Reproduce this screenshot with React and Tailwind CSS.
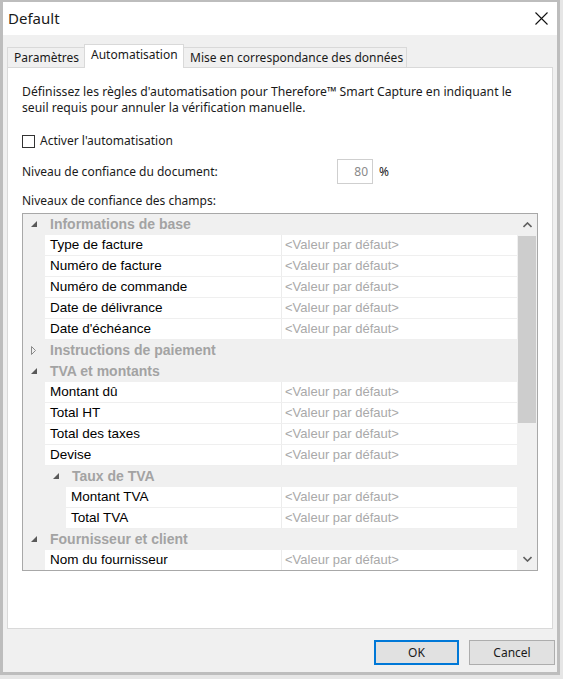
import React from "react";

const ui = { fontFamily: '"Noto Sans", "Open Sans", sans-serif' };
const tree = { fontFamily: '"Liberation Sans", Arial, sans-serif' };

const rows = [
  { type: "group", label: "Informations de base", level: 1, open: true },
  { type: "item", label: "Type de facture", level: 1 },
  { type: "item", label: "Numéro de facture", level: 1 },
  { type: "item", label: "Numéro de commande", level: 1 },
  { type: "item", label: "Date de délivrance", level: 1 },
  { type: "item", label: "Date d'échéance", level: 1 },
  { type: "group", label: "Instructions de paiement", level: 1, open: false },
  { type: "group", label: "TVA et montants", level: 1, open: true },
  { type: "item", label: "Montant dû", level: 1 },
  { type: "item", label: "Total HT", level: 1 },
  { type: "item", label: "Total des taxes", level: 1 },
  { type: "item", label: "Devise", level: 1 },
  { type: "group", label: "Taux de TVA", level: 2, open: true },
  { type: "item", label: "Montant TVA", level: 2 },
  { type: "item", label: "Total TVA", level: 2 },
  { type: "group", label: "Fournisseur et client", level: 1, open: true },
  { type: "item", label: "Nom du fournisseur", level: 1 },
];

function Arrow({ open }) {
  if (open) {
    return (
      <svg width="7" height="7" viewBox="0 0 7 7">
        <polygon points="6,0 6,6 0,6" fill="#595959" />
      </svg>
    );
  }
  return (
    <svg width="6" height="9" viewBox="0 0 6 9">
      <polygon points="0.5,0.5 4.5,4.5 0.5,8.5" fill="none" stroke="#8a8a8a" />
    </svg>
  );
}

function Row({ row }) {
  if (row.type === "group") {
    return (
      <div className="flex h-[21px] shrink-0 items-center">
        <div className={row.level === 2 ? "w-[30px] shrink-0" : "w-[8px] shrink-0"} />
        <div className="flex w-[19px] shrink-0 items-center">
          <Arrow open={row.open} />
        </div>
        <span className="text-[14px] font-bold text-[#a3a3a3]" style={tree}>
          {row.label}
        </span>
      </div>
    );
  }
  return (
    <div className="flex h-[21px] shrink-0">
      <div className={row.level === 2 ? "w-[43px] shrink-0" : "w-[22px] shrink-0"} />
      <div className="flex flex-1 border-b border-[#efefef] bg-white">
        <div className="flex flex-1 items-center border-r border-[#ececec] pl-[5px] text-[13.5px] text-black" style={tree}>
          {row.label}
        </div>
        <div className="flex w-[235px] shrink-0 items-center pl-[3px] text-[13px] text-[#a9a9a9]" style={tree}>
          &lt;Valeur par défaut&gt;
        </div>
      </div>
    </div>
  );
}

function Scrollbar() {
  return (
    <div className="flex w-[20px] shrink-0 flex-col bg-[#f0f0f0]">
      <div className="flex h-[22px] items-center justify-center">
        <svg width="9" height="6" viewBox="0 0 9 6">
          <polyline points="0.5,5 4.5,1 8.5,5" fill="none" stroke="#606060" strokeWidth="1.6" />
        </svg>
      </div>
      <div className="mx-[1px] h-[187px] bg-[#cdcdcd]" />
      <div className="flex-1" />
      <div className="flex h-[22px] items-center justify-center">
        <svg width="9" height="6" viewBox="0 0 9 6">
          <polyline points="0.5,1 4.5,5 8.5,1" fill="none" stroke="#606060" strokeWidth="1.6" />
        </svg>
      </div>
    </div>
  );
}

export default function App() {
  return (
    <div className="h-[679px] w-[563px] overflow-hidden bg-[#e6e6e6]" style={ui}>
      <div className="flex h-[675px] w-[560px] flex-col border-b-[3px] border-l-[3px] border-r-[3px] border-t-2 border-[#bdbdbd] bg-[#f0f0f0]">
        <div className="flex h-[33px] shrink-0 items-center justify-between bg-white pl-[5px] pr-[9px]">
          <span className="text-[15px] text-[#1a1a1a]">Default</span>
          <svg width="13" height="13" viewBox="0 0 13 13">
            <path d="M0.5 0.5 L12.5 12.5 M12.5 0.5 L0.5 12.5" stroke="#111" strokeWidth="1.1" />
          </svg>
        </div>

        <div className="flex h-[32px] shrink-0 items-end px-[4px] text-[12px] text-[#1a1a1a]">
          <div className="flex h-[20px] w-[77px] items-center border-l border-t border-[#d9d9d9] pl-[6px]">
            Paramètres
          </div>
          <div className="relative z-10 -mb-px flex h-[24px] w-[100px] items-center border-l border-r border-t border-[#d9d9d9] bg-white pb-[3px] pl-[6px]">
            Automatisation
          </div>
          <div className="flex h-[20px] w-[223px] items-center border-r border-t border-[#d9d9d9] pl-[6px]">
            Mise en correspondance des données
          </div>
        </div>

        <div className="mx-[4px] flex h-[562px] shrink-0 flex-col border border-[#d9d9d9] bg-white px-[14px] pt-[16px] text-[12px] text-[#1a1a1a]">
          <p className="w-[500px] text-[12.2px] leading-[16px]">
            Définissez les règles d'automatisation pour Therefore™ Smart Capture en indiquant le seuil requis pour annuler la vérification manuelle.
          </p>

          <label className="mt-[18px] flex h-[14px] items-center gap-[5px]">
            <span className="h-[13px] w-[13px] border border-[#333]" />
            <span>Activer l'automatisation</span>
          </label>

          <div className="mt-[11px] flex h-[25px] items-center">
            <span className="w-[315px]">Niveau de confiance du document:</span>
            <span className="flex h-[25px] w-[36px] items-center justify-end border border-[#cfcfcf] pr-[4px] text-[#8a8a8a]">
              80
            </span>
            <span className="ml-[6px]">%</span>
          </div>

          <div className="mt-[9px] leading-[16px]">Niveaux de confiance des champs:</div>

          <div className="mt-[4px] flex h-[358px] border border-[#a8a8a8] bg-[#f0f0f0]">
            <div className="flex flex-1 flex-col overflow-hidden">
              {rows.map((r, i) => (
                <Row key={i} row={r} />
              ))}
            </div>
            <Scrollbar />
          </div>
        </div>

        <div className="mt-[11px] flex justify-end gap-[10px] pr-[2px] text-[12px] text-[#1a1a1a]">
          <button className="flex h-[25px] w-[85px] items-center justify-center border-2 border-[#0078d7] bg-[#e1e1e1]">
            OK
          </button>
          <button className="flex h-[25px] w-[86px] items-center justify-center border border-[#adadad] bg-[#e1e1e1]">
            Cancel
          </button>
        </div>
      </div>
    </div>
  );
}
